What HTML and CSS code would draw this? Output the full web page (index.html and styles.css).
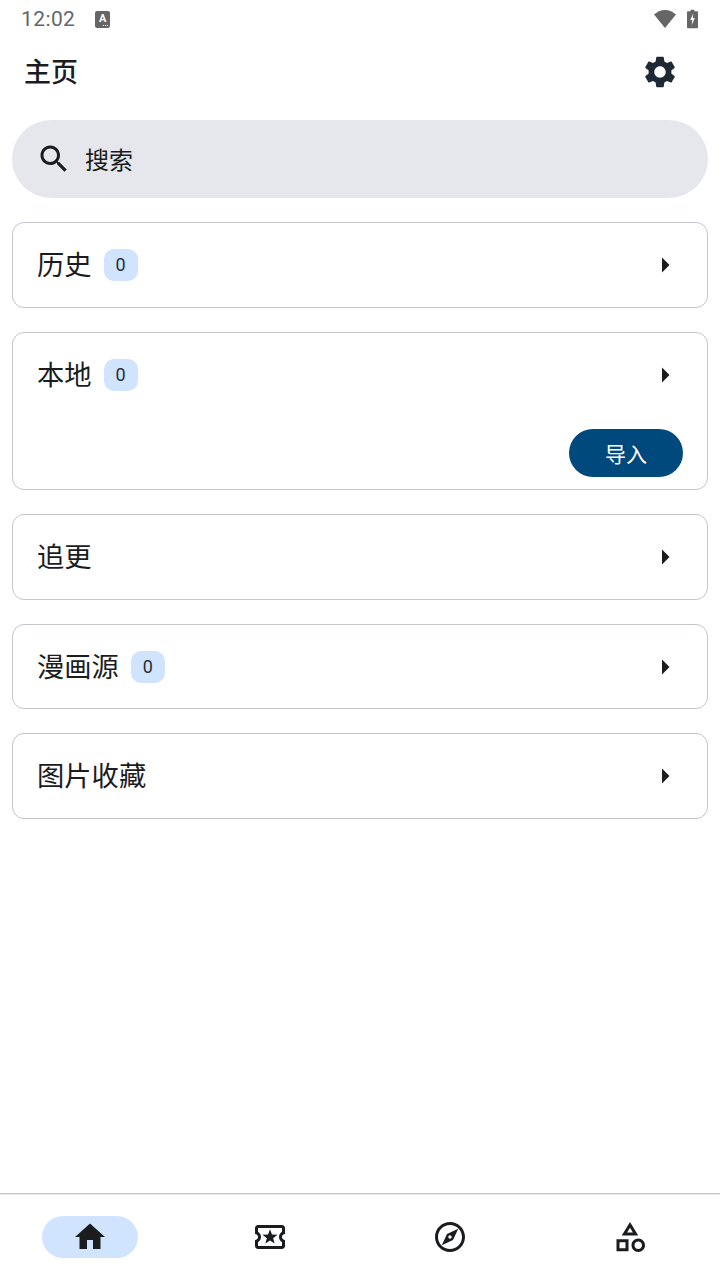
FILE: index.html
```html
<!DOCTYPE html>
<html lang="zh-CN">
<head>
  <meta charset="UTF-8">
  <meta name="viewport" content="width=device-width, initial-scale=1.0">
  <title>主页</title>
  <link rel="stylesheet" href="styles.css">
</head>
<body>
  <div class="page">

    <!-- Status bar -->
    <div class="status-bar">
      <span class="status-time">12:02</span>
      <span class="status-note">A</span>
      <span class="status-right">
        <svg class="wifi-icon" viewBox="0 0 22 18"><path d="M11 18L0 4.600C3 2 6.800 0 11 0s8 2 11 4.600z"/></svg>
        <svg class="battery-icon" viewBox="0 0 12 20"><path d="M4 0h4v1.500h3a1 1 0 0 1 1 1V19a1 1 0 0 1-1 1H1a1 1 0 0 1-1-1V2.500a1 1 0 0 1 1-1h3z"/><path class="bolt" d="M6.800 4L3.500 11h2.200l-.6 5.500L8.600 9H6.300z"/></svg>
      </span>
    </div>

    <!-- App bar -->
    <header class="app-bar">
      <h1>主页</h1>
      <svg class="settings-icon" viewBox="0 0 24 24"><path d="M19.14 12.94c.04-.3.06-.61.06-.94 0-.32-.02-.64-.07-.94l2.030-1.580c.18-.14.23-.41.12-.61l-1.920-3.320c-.12-.22-.37-.29-.59-.22l-2.390.96c-.5-.38-1.030-.7-1.620-.94l-.36-2.540c-.04-.24-.24-.41-.48-.41h-3.840c-.24 0-.43.17-.47.41l-.36 2.540c-.59.24-1.130.57-1.620.94l-2.390-.96c-.22-.08-.47 0-.59.22L2.740 8.870c-.12.21-.08.47.12.61l2.030 1.580c-.05.3-.09.63-.09.94s.02.64.07.94l-2.030 1.580c-.18.14-.23.41-.12.61l1.920 3.320c.12.22.37.29.59.22l2.390-.96c.5.38 1.030.7 1.620.94l.36 2.540c.05.24.24.41.48.41h3.840c.24 0 .44-.17.47-.41l.36-2.540c.59-.24 1.130-.56 1.620-.94l2.390.96c.22.08.47 0 .59-.22l1.920-3.320c.12-.22.07-.47-.12-.61l-2.010-1.580zM12 15.600c-1.980 0-3.600-1.620-3.600-3.600s1.620-3.600 3.600-3.600 3.600 1.620 3.600 3.600-1.620 3.600-3.600 3.600z"/></svg>
    </header>

    <main class="content">
      <!-- Search -->
      <div class="search-box">
        <svg class="search-icon" viewBox="0 0 24 24"><path d="M15.500 14h-.79l-.28-.27C15.410 12.590 16 11.110 16 9.500 16 5.910 13.090 3 9.500 3S3 5.910 3 9.500 5.910 16 9.500 16c1.610 0 3.090-.59 4.230-1.570l.27.28v.79l5 4.990L20.490 19l-4.990-5zm-6 0C7.010 14 5 11.990 5 9.500S7.010 5 9.500 5 14 7.010 14 9.500 11.990 14 9.500 14z"/></svg>
        <span class="search-text">搜索</span>
      </div>

      <!-- Sections -->
      <section class="card">
        <div class="card-row">
          <span class="card-title">历史</span>
          <span class="count">0</span>
          <svg class="arrow" viewBox="0 0 24 24"><path d="M10 17l5-5-5-5v10z"/></svg>
        </div>
      </section>

      <section class="card">
        <div class="card-row">
          <span class="card-title">本地</span>
          <span class="count">0</span>
          <svg class="arrow" viewBox="0 0 24 24"><path d="M10 17l5-5-5-5v10z"/></svg>
        </div>
        <div class="card-actions">
          <button class="import-btn">导入</button>
        </div>
      </section>

      <section class="card">
        <div class="card-row">
          <span class="card-title">追更</span>
          <svg class="arrow" viewBox="0 0 24 24"><path d="M10 17l5-5-5-5v10z"/></svg>
        </div>
      </section>

      <section class="card">
        <div class="card-row">
          <span class="card-title">漫画源</span>
          <span class="count">0</span>
          <svg class="arrow" viewBox="0 0 24 24"><path d="M10 17l5-5-5-5v10z"/></svg>
        </div>
      </section>

      <section class="card">
        <div class="card-row">
          <span class="card-title">图片收藏</span>
          <svg class="arrow" viewBox="0 0 24 24"><path d="M10 17l5-5-5-5v10z"/></svg>
        </div>
      </section>
    </main>

    <!-- Bottom navigation -->
    <nav class="bottom-nav">
      <div class="nav-item active">
        <svg viewBox="0 0 24 24"><path d="M10 20v-6h4v6h5v-8h3L12 3 2 12h3v8z"/></svg>
      </div>
      <div class="nav-item">
        <svg viewBox="0 0 24 24"><path fill-rule="evenodd" d="M20 12c0-1.100.9-2 2-2V6c0-1.100-.9-2-2-2H4c-1.100 0-1.990.9-1.990 2v4c1.100 0 1.990.9 1.990 2s-.89 2-2 2v4c0 1.100.9 2 2 2h16c1.100 0 2-.9 2-2v-4c-1.100 0-2-.9-2-2zM20 8.540c-1.190.69-2 1.990-2 3.460s.81 2.770 2 3.460V18H4v-2.540c1.190-.69 2-1.990 2-3.460 0-1.480-.8-2.770-1.990-3.460L4 6h16v2.540z"/><path d="M12 6.800l1.300 3.500 3.700.2-2.900 2.300 1 3.600L12 14.400 8.900 16.400l1-3.600-2.900-2.300 3.700-.2z"/></svg>
      </div>
      <div class="nav-item">
        <svg viewBox="0 0 24 24"><path d="M12 2C6.480 2 2 6.480 2 12s4.480 10 10 10 10-4.480 10-10S17.520 2 12 2zm0 18c-4.410 0-8-3.590-8-8s3.590-8 8-8 8 3.590 8 8-3.590 8-8 8zm-5.500-2.500l7.510-3.490L17.500 6.500 9.990 9.990 6.500 17.500zm5.500-6.600c.61 0 1.100.49 1.100 1.100s-.49 1.100-1.100 1.100-1.100-.49-1.100-1.100.49-1.100 1.100-1.100z"/></svg>
      </div>
      <div class="nav-item">
        <svg viewBox="0 0 24 24"><path d="M12 2l-5.500 9h11L12 2zm0 3.840L13.930 9h-3.870L12 5.840zM17.500 13c-2.490 0-4.500 2.010-4.500 4.500s2.010 4.500 4.500 4.500 4.500-2.010 4.500-4.500-2.010-4.500-4.500-4.500zm0 7c-1.380 0-2.500-1.120-2.500-2.500s1.120-2.500 2.500-2.500 2.500 1.120 2.500 2.500-1.120 2.500-2.500 2.500zM3 21.500h8v-8H3v8zm2-6h4v4H5v-4z"/></svg>
      </div>
    </nav>
  </div>
</body>
</html>
```

FILE: styles.css
```css
:root {
  --text-color: #1a1c1e;
  --outline-color: #c3c6cf;
  --badge-color: #d1e4ff;
  --primary-color: #00497d;
  --search-color: #e6e7ec;
  --status-color: #666;
}

* {
  box-sizing: border-box;
}

body {
  margin: 0;
  background: #fff;
  color: var(--text-color);
  font-family: "Roboto", "Noto Sans CJK SC", sans-serif;
}

.page {
  display: flex;
  flex-direction: column;
  width: 720px;
  height: 1280px;
  overflow: hidden;
}

.status-bar {
  display: flex;
  align-items: center;
  height: 38px;
  padding: 0 22px 0 21px;
  color: var(--status-color);
}

.status-time {
  font-size: 21px;
  letter-spacing: 0.4px;
}

.status-note {
  position: relative;
  display: flex;
  align-items: center;
  justify-content: center;
  width: 15px;
  height: 17px;
  margin-left: 20px;
  padding-bottom: 2px;
  border-radius: 2px;
  background: var(--status-color);
  color: #fff;
  font-size: 11px;
  font-weight: 700;
}

/* the three dots under the letter */
.status-note::after {
  content: "";
  position: absolute;
  right: 6px;
  bottom: 2px;
  width: 1px;
  height: 1px;
  background: #fff;
  box-shadow: 2px 0 0 #fff, 4px 0 0 #fff;
}

.status-right {
  display: flex;
  align-items: center;
  gap: 11px;
  margin-left: auto;
}

.wifi-icon {
  width: 22px;
  height: 18px;
  fill: var(--status-color);
}

.battery-icon {
  width: 11px;
  height: 20px;
  fill: var(--status-color);
}

.battery-icon .bolt {
  fill: #fff;
}

.app-bar {
  display: flex;
  align-items: center;
  justify-content: space-between;
  height: 68px;
  padding: 0 41px 0 24px;
}

.app-bar h1 {
  margin: 0 0 4px;
  font-size: 27px;
  font-weight: 500;
}

.settings-icon {
  width: 38px;
  height: 38px;
  fill: #1f2933;
}

.content {
  display: flex;
  flex: 1;
  flex-direction: column;
  gap: 24px;
  padding: 14px 12px 0;
}

.search-box {
  display: flex;
  align-items: center;
  gap: 13px;
  height: 78px;
  padding-left: 24px;
  border-radius: 39px;
  background: var(--search-color);
  font-size: 24px;
}

.search-text {
  margin-bottom: 2px;
}

.search-icon {
  width: 36px;
  height: 36px;
  fill: var(--text-color);
}

.card {
  border: 1px solid var(--outline-color);
  border-radius: 12px;
}

.card-row {
  display: flex;
  align-items: center;
  height: 83.7px;
  padding: 0 24px;
}

.card-title {
  margin-bottom: 4px;
  font-size: 27.3px;
}

.count {
  display: flex;
  align-items: center;
  justify-content: center;
  width: 34px;
  height: 32px;
  margin-left: 12px;
  border-radius: 10px;
  background: var(--badge-color);
  color: #2b2d30;
  font-size: 18px;
}

.arrow {
  width: 36px;
  height: 36px;
  margin-left: auto;
  fill: var(--text-color);
}

.card-actions {
  display: flex;
  justify-content: flex-end;
  padding: 12.6px 24px 12px;
}

.import-btn {
  width: 114px;
  height: 48px;
  border: none;
  border-radius: 24px;
  background: var(--primary-color);
  color: #fff;
  font-family: inherit;
  font-size: 21px;
}

.bottom-nav {
  display: grid;
  grid-template-columns: repeat(4, 1fr);
  align-items: center;
  justify-items: center;
  height: 87px;
  border-top: 1px solid var(--outline-color);
  box-shadow: inset 0 1px 0 #e6e8ee;
}

.nav-item {
  display: flex;
  align-items: center;
  justify-content: center;
  width: 96px;
  height: 42px;
  border-radius: 21px;
}

.nav-item svg {
  width: 36px;
  height: 36px;
  fill: var(--text-color);
}

.nav-item.active {
  background: var(--badge-color);
}
```
